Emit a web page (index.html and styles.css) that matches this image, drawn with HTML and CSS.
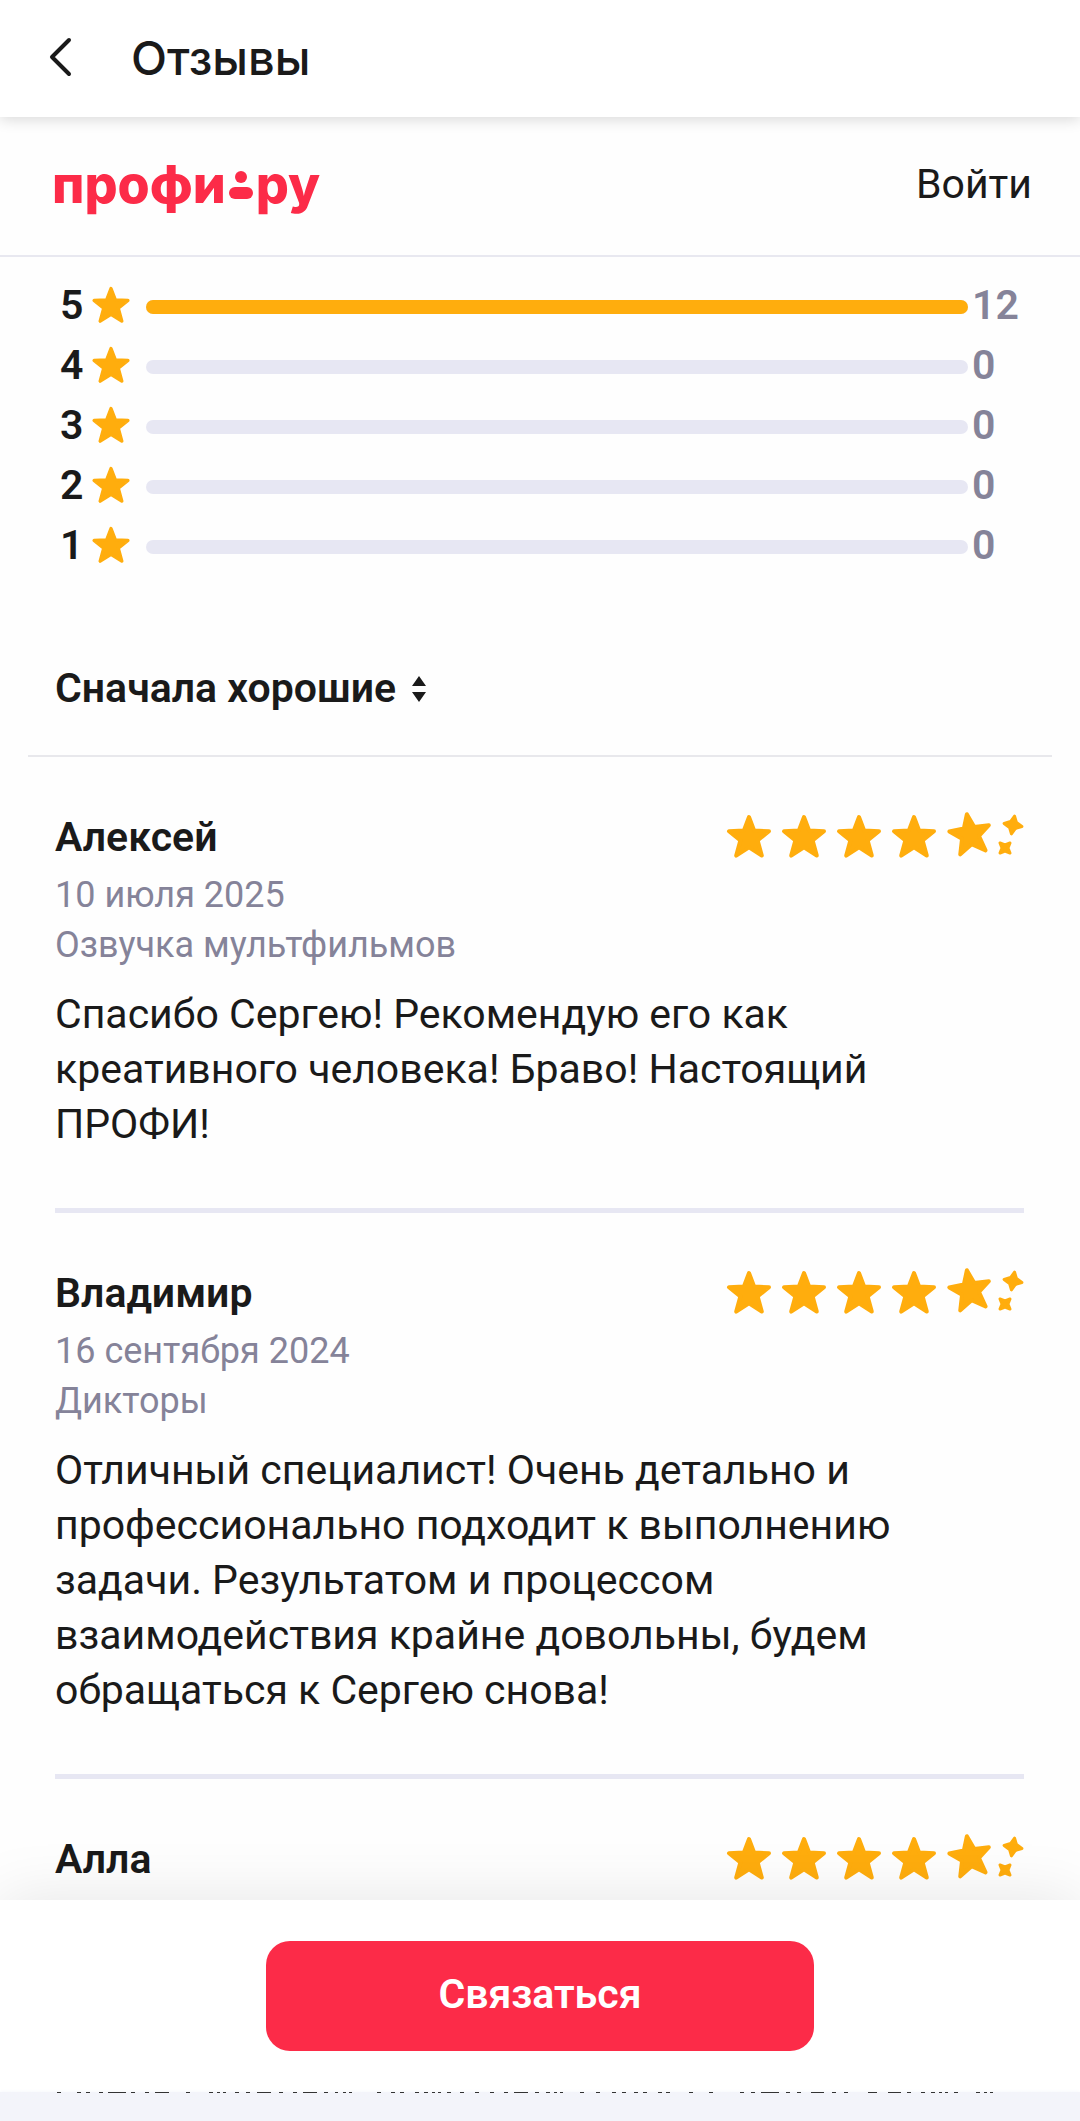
FILE: index.html
```html
<!DOCTYPE html>
<html lang="ru">
<head>
<meta charset="utf-8">
<meta name="viewport" content="width=device-width, initial-scale=1">
<title>Отзывы</title>
<link rel="stylesheet" href="styles.css">
</head>
<body>
<svg class="sprite" aria-hidden="true">
  <symbol id="star" viewBox="0 0 46 45">
    <path d="M23 3 28.2 16.600 43 17.200 31.600 26.400 35.800 41.600 23 33.400 10.200 41.600 14.400 26.400 3 17.200 17.800 16.600Z" fill="currentColor" stroke="currentColor" stroke-width="4" stroke-linejoin="round"/>
  </symbol>
  <symbol id="star-shine" viewBox="0 0 78 45" overflow="visible">
    <path d="M23 3 28.2 16.600 43 17.200 31.600 26.400 35.800 41.600 23 33.400 10.200 41.600 14.400 26.400 3 17.200 17.800 16.600Z" transform="translate(1 -3) rotate(-9 23 23)" fill="currentColor" stroke="currentColor" stroke-width="4" stroke-linejoin="round"/>
    <path d="M67 2 70 8 76 11 70 14 67 20 64 14 58 11 64 8Z" transform="rotate(10 67 11)" fill="currentColor" stroke="currentColor" stroke-width="3" stroke-linejoin="round"/>
    <path d="M54 29 59 31 64 29 62 34 64 39 59 37 54 39 56 34Z" fill="currentColor" stroke="currentColor" stroke-width="3" stroke-linejoin="round"/>
  </symbol>
</svg>

<header class="appbar">
  <button class="back" type="button" aria-label="Назад">
    <svg width="24" height="40" viewBox="0 0 24 40" fill="none" stroke="currentColor" stroke-width="4" stroke-linecap="round" stroke-linejoin="round"><path d="M20 3 3 20 20 37"/></svg>
  </button>
  <h1 class="title">Отзывы</h1>
</header>

<div class="sitebar">
  <a class="logo" href="#" aria-label="профи.ру">профи<svg class="logo-dot" width="24" height="29" viewBox="0 0 24 29" fill="currentColor"><circle cx="12" cy="7" r="6"/><rect y="17" width="24" height="12" rx="6"/></svg>ру</a>
  <a class="login" href="#">Войти</a>
</div>

<main class="page">
  <ul class="ratings">
    <li class="rating"><span class="score">5</span><svg class="mini"><use href="#star"/></svg><span class="bar"><span class="fill" style="width:100%"></span></span><span class="count">12</span></li>
    <li class="rating"><span class="score">4</span><svg class="mini"><use href="#star"/></svg><span class="bar"></span><span class="count">0</span></li>
    <li class="rating"><span class="score">3</span><svg class="mini"><use href="#star"/></svg><span class="bar"></span><span class="count">0</span></li>
    <li class="rating"><span class="score">2</span><svg class="mini"><use href="#star"/></svg><span class="bar"></span><span class="count">0</span></li>
    <li class="rating"><span class="score">1</span><svg class="mini"><use href="#star"/></svg><span class="bar"></span><span class="count">0</span></li>
  </ul>

  <div class="sortbar">
    <button class="sort" type="button">Сначала хорошие
      <svg width="14" height="26" viewBox="0 0 14 26" fill="currentColor"><path d="M7 0 14 10H0ZM0 16H14L7 26Z"/></svg>
    </button>
  </div>

  <article class="review">
    <div class="review-head">
      <h2 class="name">Алексей</h2>
      <div class="stars" role="img" aria-label="Оценка 5 из 5"><svg><use href="#star"/></svg><svg><use href="#star"/></svg><svg><use href="#star"/></svg><svg><use href="#star"/></svg><svg class="shine"><use href="#star-shine"/></svg></div>
    </div>
    <p class="meta">10 июля 2025</p>
    <p class="meta">Озвучка мультфильмов</p>
    <p class="text">Спасибо Сергею! Рекомендую его как креативного человека! Браво! Настоящий ПРОФИ!</p>
  </article>

  <article class="review">
    <div class="review-head">
      <h2 class="name">Владимир</h2>
      <div class="stars" role="img" aria-label="Оценка 5 из 5"><svg><use href="#star"/></svg><svg><use href="#star"/></svg><svg><use href="#star"/></svg><svg><use href="#star"/></svg><svg class="shine"><use href="#star-shine"/></svg></div>
    </div>
    <p class="meta">16 сентября 2024</p>
    <p class="meta">Дикторы</p>
    <p class="text">Отличный специалист! Очень детально и профессионально подходит к выполнению задачи. Результатом и процессом взаимодействия крайне довольны, будем обращаться к Сергею снова!</p>
  </article>

  <article class="review">
    <div class="review-head">
      <h2 class="name">Алла</h2>
      <div class="stars" role="img" aria-label="Оценка 5 из 5"><svg><use href="#star"/></svg><svg><use href="#star"/></svg><svg><use href="#star"/></svg><svg><use href="#star"/></svg><svg class="shine"><use href="#star-shine"/></svg></div>
    </div>
  </article>
</main>

<footer class="dock">
  <div class="dock-panel"><button class="contact" type="button">Связаться</button></div>
  <div class="dock-strip">
    <svg class="sliver" viewBox="0 0 1080 1" preserveAspectRatio="none" stroke="#333" aria-hidden="true"><path d="M57 .5h4M77 .5h4M86 .5h4M99 .5h4M108 .5h18M131 .5h4M145 .5h4M155 .5h14M186 .5h4M209 .5h4M217 .5h3M223 .5h3M235 .5h4M246 .5h4M257 .5h14M279 .5h4M293 .5h4M303 .5h14M324 .5h4M335 .5h3M343 .5h3M349 .5h3M377 .5h4M391 .5h4M400 .5h4M415 .5h4M424 .5h4M432 .5h3M438 .5h3M447 .5h4M460 .5h4M475 .5h4M490 .5h4M504 .5h4M514 .5h14M535 .5h4M546 .5h4M554 .5h3M560 .5h3M580 .5h4M596 .5h4M612 .5h4M622 .5h4M634 .5h4M643 .5h4M658 .5h4M666 .5h4M689 .5h4M709 .5h4M740 .5h4M751 .5h4M761 .5h18M786 .5h4M797 .5h4M811 .5h13M832 .5h4M844 .5h4M868 .5h9M888 .5h13M907 .5h4M921 .5h4M931 .5h4M939 .5h3M945 .5h3M954 .5h4M976 .5h4M984 .5h3M990 .5h3"/></svg>
  </div>
</footer>
</body>
</html>
```
FILE: styles.css
```css
* { box-sizing: border-box; margin: 0; padding: 0; }

html { height: 100%; }

body {
  display: flex;
  flex-direction: column;
  height: 100%;
  overflow: hidden;
  background: #fefefe;
  color: #1a1a1a;
  font-family: Roboto, "Liberation Sans", sans-serif;
  font-size: 41px;
  line-height: 55px;
}

a { color: inherit; text-decoration: none; }
button { border: 0; background: none; color: inherit; font: inherit; cursor: pointer; }
svg { display: block; flex: none; }
.sprite { position: absolute; width: 0; height: 0; }

.appbar {
  position: relative;
  display: flex;
  flex: none;
  align-items: center;
  gap: 58px;
  height: 117px;
  padding: 0 49px 3px;
  background: #fff;
  box-shadow: 0 2px 14px rgba(0, 0, 0, 0.16);
}
.title { font-family: Inter, Roboto, sans-serif; font-size: 47px; font-weight: 500; }

.sitebar {
  display: flex;
  flex: none;
  align-items: center;
  justify-content: space-between;
  height: 140px;
  padding: 0 48px 4px 52px;
  border-bottom: 2px solid #e8e8f0;
}
.logo {
  display: flex;
  align-items: center;
  gap: 3px;
  color: #fc2b48;
  font-family: Inter, Roboto, sans-serif;
  font-size: 52px;
  font-weight: 800;
}

.page { flex: 1; min-height: 0; overflow: hidden; }

.ratings { padding: 18px 54px 0 60px; list-style: none; }
.rating { display: flex; align-items: center; height: 60px; font-weight: 600; }
.score { width: 31px; }
.mini { width: 40px; height: 38px; color: #ffad0d; }
.bar { flex: 1; height: 14px; margin: 4px 4px 0 15px; border-radius: 7px; background: #e7e7f3; }
.fill { display: block; height: 100%; border-radius: 7px; background: #ffad0d; }
.count { width: 54px; color: #858399; }

.sortbar { margin: 53px 28px 0; padding: 33px 27px 39px; border-bottom: 2px solid #e8e8ec; }
.sort { display: flex; align-items: center; gap: 16px; font-weight: 600; }

.review { margin: 0 56px 0 55px; padding: 53px 0 56px; border-bottom: 5px solid #e7e7f3; }
.review-head { display: flex; align-items: center; justify-content: space-between; margin-bottom: 5px; }
.name { font-size: 41px; font-weight: 600; }
.stars { display: flex; gap: 9px; padding-bottom: 3px; color: #ffad0d; }
.stars svg { width: 46px; height: 45px; overflow: visible; }
.stars .shine { width: 78px; }
.meta { color: #858399; font-size: 36px; line-height: 50px; }
.text { margin-top: 17px; }

.dock { position: relative; flex: none; }
.dock-panel {
  display: flex;
  justify-content: center;
  padding: 41px;
  background: #fff;
  box-shadow: 0 0 60px rgba(0, 0, 0, 0.1);
}
.contact {
  width: 55%;
  height: 110px;
  padding-bottom: 4px;
  border-radius: 24px;
  background: #fc2b48;
  color: #fff;
  font-weight: 600;
}
.dock-strip { height: 29px; background: #f3f4fa; box-shadow: 0 0 4px #f3f4fa; }
.sliver { width: 100%; height: 1px; }
```
